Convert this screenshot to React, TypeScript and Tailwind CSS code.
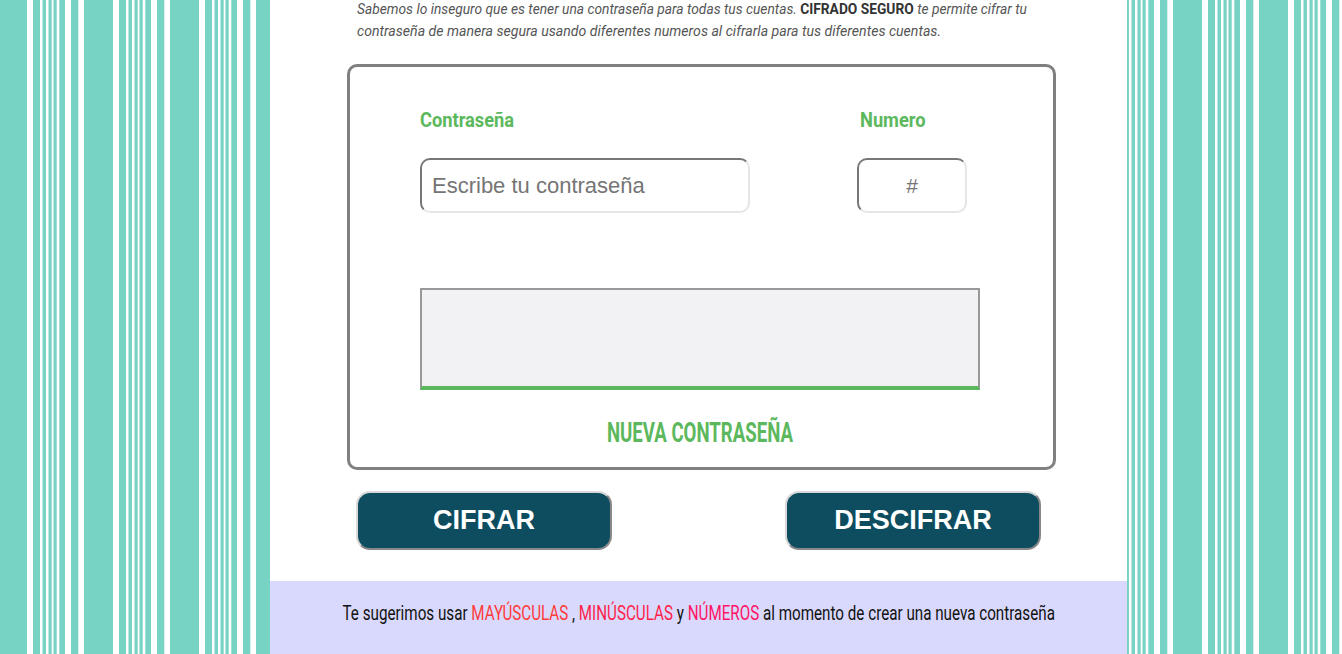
import React from 'react';

const condensed = "font-['Roboto','Liberation_Sans',sans-serif]";

// Background stripes of the side columns (one tile = 86px)
function Stripes({ id, offset }: { id: string; offset: number }) {
  const bars = [
    [0, 6],
    [13, 2.5],
    [19, 2.5],
    [24.7, 1.8],
    [29.7, 2.6],
    [38, 6],
    [51.3, 5.7],
  ];
  return (
    <svg className="block h-full w-full" aria-hidden="true">
      <defs>
        <pattern id={id} x={offset} y="0" width="86" height="10" patternUnits="userSpaceOnUse">
          <rect width="86" height="10" fill="#77d3c3" />
          {bars.map(([x, w]) => (
            <rect key={x} x={x} y="0" width={w} height="10" fill="#ffffff" />
          ))}
        </pattern>
      </defs>
      <rect width="100%" height="100%" fill={`url(#${id})`} />
    </svg>
  );
}

export default function App() {
  return (
    <div className="flex h-[654px] w-full overflow-hidden bg-white">
      {/* Left stripes */}
      <div className="h-full w-[270px] shrink-0">
        <Stripes id="stripes-left" offset={27} />
      </div>

      {/* Center panel */}
      <main className="flex h-full w-[857px] shrink-0 flex-col bg-white">
        <div className={`${condensed} -mt-[2px] shrink-0 pl-[87px] text-[15px] leading-[22px] italic text-[#555]`}>
          <p className="origin-left scale-x-[0.918] whitespace-nowrap">
            Sabemos lo inseguro que es tener una contraseña para todas tus cuentas.{' '}
            <span className="font-bold not-italic text-[#333]">CIFRADO SEGURO</span> te permite cifrar tu
          </p>
          <p className="origin-left scale-x-[0.94] whitespace-nowrap">
            contraseña de manera segura usando diferentes numeros al cifrarla para tus diferentes cuentas.
          </p>
        </div>

        {/* Form card */}
        <section className="ml-[77px] mt-[22px] h-[406px] w-[709px] shrink-0 rounded-[10px] border-[3px] border-[#808080] pl-[70px]">
          <div className="flex pt-[38px]">
            <div className="w-[437px]">
              <label className={`${condensed} block origin-left scale-x-[0.87] text-[21px] leading-[30px] font-bold text-[#5cb85c]`}>
                Contraseña
              </label>
              <input
                type="text"
                placeholder="Escribe tu contraseña"
                className="mt-[23px] h-[55px] w-[330px] rounded-[10px] border-2 border-t-[#777] border-l-[#777] border-r-[#e6e6e6] border-b-[#e6e6e6] px-[10px] font-['Liberation_Sans',Arial,sans-serif] text-[22px] text-[#333] placeholder:text-[#757575] outline-none"
              />
            </div>
            <div>
              <label className={`${condensed} ml-[3px] block origin-left scale-x-[0.87] text-[21px] leading-[30px] font-bold text-[#5cb85c]`}>
                Numero
              </label>
              <input
                type="text"
                placeholder="#"
                className="mt-[23px] h-[55px] w-[110px] rounded-[10px] border-2 border-t-[#777] border-l-[#777] border-r-[#e6e6e6] border-b-[#e6e6e6] text-center font-['Liberation_Sans',Arial,sans-serif] text-[21px] text-[#333] placeholder:text-[#757575] outline-none"
              />
            </div>
          </div>

          <div className="mt-[75px] h-[102px] w-[560px] border-2 border-b-4 border-[#999] border-b-[#5cb85c] bg-[#f2f2f4]" />

          <h2 className={`${condensed} mt-[28px] w-[560px] scale-x-[0.665] text-center text-[28px] leading-[30px] font-bold whitespace-nowrap text-[#5cb85c]`}>
            NUEVA CONTRASEÑA
          </h2>
        </section>

        {/* Buttons */}
        <div className="ml-[86px] mt-[21px] flex w-[685px] shrink-0 justify-between">
          <button className="h-[59px] w-[256px] rounded-[14px] border-2 border-t-[#d8d8d8] border-l-[#d8d8d8] border-r-[#888] border-b-[#888] bg-[#0d4d5f] font-['Liberation_Sans',Arial,sans-serif] text-[27px] font-bold text-white">
            CIFRAR
          </button>
          <button className="h-[59px] w-[256px] rounded-[14px] border-2 border-t-[#d8d8d8] border-l-[#d8d8d8] border-r-[#888] border-b-[#888] bg-[#0d4d5f] font-['Liberation_Sans',Arial,sans-serif] text-[27px] font-bold text-white">
            DESCIFRAR
          </button>
        </div>

        {/* Footer tip */}
        <footer className={`${condensed} mt-[31px] flex flex-1 justify-center bg-[#d9d9fd] pt-[20px] text-[20px] leading-[24px] text-[#111]`}>
          <p className="h-[24px] shrink-0 scale-x-[0.76] whitespace-nowrap">
            Te sugerimos usar <span className="text-[#ff3b3b]">MAYÚSCULAS</span> ,{' '}
            <span className="text-[#ff1f4b]">MINÚSCULAS</span> y{' '}
            <span className="text-[#ff1466]">NÚMEROS</span> al momento de crear una nueva contraseña
          </p>
        </footer>
      </main>

      {/* Right stripes */}
      <div className="h-full flex-1">
        <Stripes id="stripes-right" offset={-11} />
      </div>
    </div>
  );
}
